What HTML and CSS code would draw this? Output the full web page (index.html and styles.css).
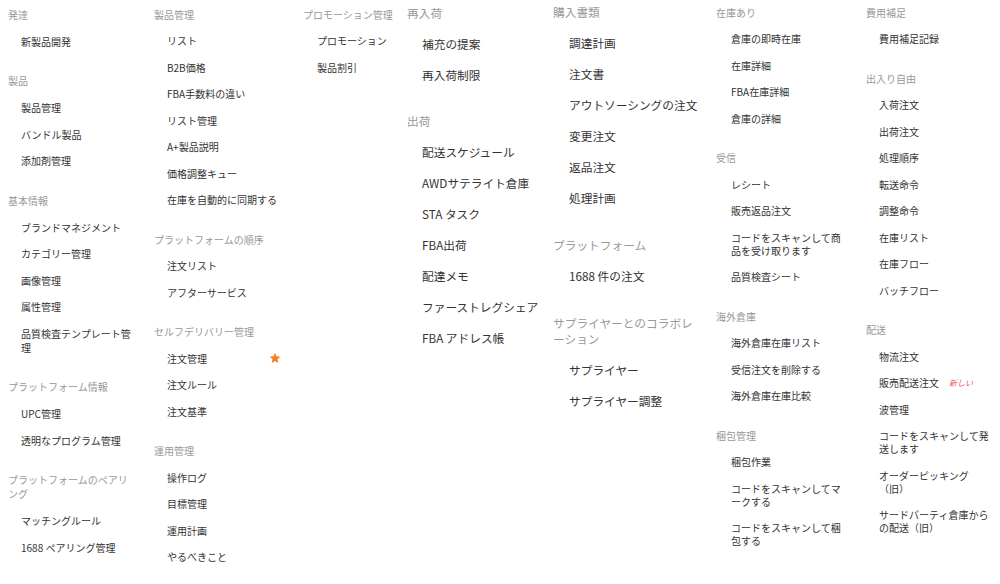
FILE: index.html
```html
<!DOCTYPE html>
<html lang="ja">
<head>
<meta charset="utf-8">
<title>Menu</title>
<link rel="stylesheet" href="styles.css">
</head>
<body>
<div class="menu">
  <div class="col col-1">
    <div class="group"><div class="gtitle">発達</div>
      <ul class="items"><li class="item">新製品開発</li></ul></div>
    <div class="group"><div class="gtitle">製品</div>
      <ul class="items"><li class="item">製品管理</li><li class="item">バンドル製品</li><li class="item">添加剤管理</li></ul></div>
    <div class="group"><div class="gtitle">基本情報</div>
      <ul class="items"><li class="item">ブランドマネジメント</li><li class="item">カテゴリー管理</li><li class="item">画像管理</li><li class="item">属性管理</li><li class="item">品質検査テンプレート管理</li></ul></div>
    <div class="group"><div class="gtitle">プラットフォーム情報</div>
      <ul class="items"><li class="item">UPC管理</li><li class="item">透明なプログラム管理</li></ul></div>
    <div class="group"><div class="gtitle">プラットフォームのペアリング</div>
      <ul class="items"><li class="item">マッチングルール</li><li class="item">1688 ペアリング管理</li></ul></div>
  </div>

  <div class="col col-2">
    <div class="group"><div class="gtitle">製品管理</div>
      <ul class="items"><li class="item">リスト</li><li class="item">B2B価格</li><li class="item">FBA手数料の違い</li><li class="item">リスト管理</li><li class="item">A+製品説明</li><li class="item">価格調整キュー</li><li class="item">在庫を自動的に同期する</li></ul></div>
    <div class="group"><div class="gtitle">プラットフォームの順序</div>
      <ul class="items"><li class="item">注文リスト</li><li class="item">アフターサービス</li></ul></div>
    <div class="group"><div class="gtitle">セルフデリバリー管理</div>
      <ul class="items">
        <li class="item item-fav"><span>注文管理</span><svg class="star" viewBox="0 0 24 24" width="12" height="12"><polygon points="12,1.5 15.1,8.6 22.8,9.3 17,14.4 18.7,22 12,18 5.3,22 7,14.4 1.2,9.3 8.9,8.6" fill="#f7811c"/></svg></li>
        <li class="item">注文ルール</li><li class="item">注文基準</li></ul></div>
    <div class="group"><div class="gtitle">運用管理</div>
      <ul class="items"><li class="item">操作ログ</li><li class="item">目標管理</li><li class="item">運用計画</li><li class="item">やるべきこと</li></ul></div>
  </div>

  <div class="col col-3">
    <div class="group"><div class="gtitle">プロモーション管理</div>
      <ul class="items"><li class="item">プロモーション</li><li class="item">製品割引</li></ul></div>
  </div>

  <div class="col col-4 lg">
    <div class="group"><div class="gtitle">再入荷</div>
      <ul class="items"><li class="item">補充の提案</li><li class="item">再入荷制限</li></ul></div>
    <div class="group"><div class="gtitle">出荷</div>
      <ul class="items"><li class="item">配送スケジュール</li><li class="item">AWDサテライト倉庫</li><li class="item">STA タスク</li><li class="item">FBA出荷</li><li class="item">配達メモ</li><li class="item">ファーストレグシェア</li><li class="item">FBA アドレス帳</li></ul></div>
  </div>

  <div class="col col-5 lg">
    <div class="group"><div class="gtitle">購入書類</div>
      <ul class="items"><li class="item">調達計画</li><li class="item">注文書</li><li class="item">アウトソーシングの注文</li><li class="item">変更注文</li><li class="item">返品注文</li><li class="item">処理計画</li></ul></div>
    <div class="group"><div class="gtitle">プラットフォーム</div>
      <ul class="items"><li class="item">1688 件の注文</li></ul></div>
    <div class="group"><div class="gtitle">サプライヤーとのコラボレーション</div>
      <ul class="items"><li class="item">サプライヤー</li><li class="item">サプライヤー調整</li></ul></div>
  </div>

  <div class="col col-6">
    <div class="group"><div class="gtitle">在庫あり</div>
      <ul class="items"><li class="item">倉庫の即時在庫</li><li class="item">在庫詳細</li><li class="item">FBA在庫詳細</li><li class="item">倉庫の詳細</li></ul></div>
    <div class="group"><div class="gtitle">受信</div>
      <ul class="items"><li class="item">レシート</li><li class="item">販売返品注文</li><li class="item">コードをスキャンして商品を受け取ります</li><li class="item">品質検査シート</li></ul></div>
    <div class="group"><div class="gtitle">海外倉庫</div>
      <ul class="items"><li class="item">海外倉庫在庫リスト</li><li class="item">受信注文を削除する</li><li class="item">海外倉庫在庫比較</li></ul></div>
    <div class="group"><div class="gtitle">梱包管理</div>
      <ul class="items"><li class="item">梱包作業</li><li class="item">コードをスキャンしてマークする</li><li class="item">コードをスキャンして梱包する</li></ul></div>
  </div>

  <div class="col col-7">
    <div class="group"><div class="gtitle">費用補足</div>
      <ul class="items"><li class="item">費用補足記録</li></ul></div>
    <div class="group"><div class="gtitle">出入り自由</div>
      <ul class="items"><li class="item">入荷注文</li><li class="item">出荷注文</li><li class="item">処理順序</li><li class="item">転送命令</li><li class="item">調整命令</li><li class="item">在庫リスト</li><li class="item">在庫フロー</li><li class="item">バッチフロー</li></ul></div>
    <div class="group"><div class="gtitle">配送</div>
      <ul class="items"><li class="item">物流注文</li><li class="item">販売配送注文<span class="new">新しい</span></li><li class="item">波管理</li><li class="item">コードをスキャンして発送します</li><li class="item">オーダーピッキング（旧）</li><li class="item">サードパーティ倉庫からの配送（旧）</li></ul></div>
  </div>
</div>
</body>
</html>
```
FILE: styles.css
```css
html, body {
  margin: 0;
  padding: 0;
  background: #ffffff;
}
body {
  font-family: "Noto Sans CJK JP", "Noto Sans", sans-serif;
  color: #333333;
}
.menu {
  display: flex;
  width: 1000px;
  height: 584px;
  overflow: hidden;
}
.col {
  box-sizing: border-box;
  flex: none;
  padding: 7.5px 8px 0 8px;
  --indent: 13px;
}
.col-1 { width: 146px; padding-top: 7.5px; padding-right: 13px; }
.col-2 { width: 149px; }
.col-3 { width: 104px; padding-right: 0; --indent: 14px; }
.col-4 { width: 146px; padding-top: 5px; padding-right: 0; --indent: 15px; }
.col-5 { width: 163px; padding-top: 4px; --indent: 16px; }
.col-6 { width: 150px; padding-top: 5.5px; --indent: 15px; }
.col-7 { width: 142px; padding-top: 5.5px; --indent: 13px; }

.group + .group { margin-top: 19.75px; }
.gtitle {
  color: #999999;
  font-size: 10px;
  line-height: 13px;
  padding-bottom: 6.75px;
}
.items {
  list-style: none;
  margin: 0;
  padding: 0;
}
.item {
  font-size: 10px;
  line-height: 13px;
  padding: 6.75px 0 6.75px var(--indent);
  color: #333333;
}
.col-1 .group + .group { margin-top: 19.25px; }
.col-1 .gtitle {
  line-height: 14px;
  padding-bottom: 6.75px;
}
.col-1 .item {
  line-height: 14px;
  padding-top: 6.25px;
  padding-bottom: 6.25px;
}
.lg .group + .group { margin-top: 23px; }
.col-4.lg .group + .group { margin-top: 22px; }
.lg .gtitle {
  font-size: 11.7px;
  line-height: 16px;
  padding-bottom: 7.75px;
}
.lg .item {
  font-size: 11.7px;
  line-height: 16px;
  padding-top: 7.5px;
  padding-bottom: 7.5px;
}
.item-fav {
  display: flex;
  align-items: center;
  justify-content: space-between;
}
.star {
  display: block;
  margin-right: 6px;
}
.new {
  margin-left: 10px;
  font-size: 8px;
  font-style: italic;
  color: #f5575c;
  vertical-align: 1px;
}
```
